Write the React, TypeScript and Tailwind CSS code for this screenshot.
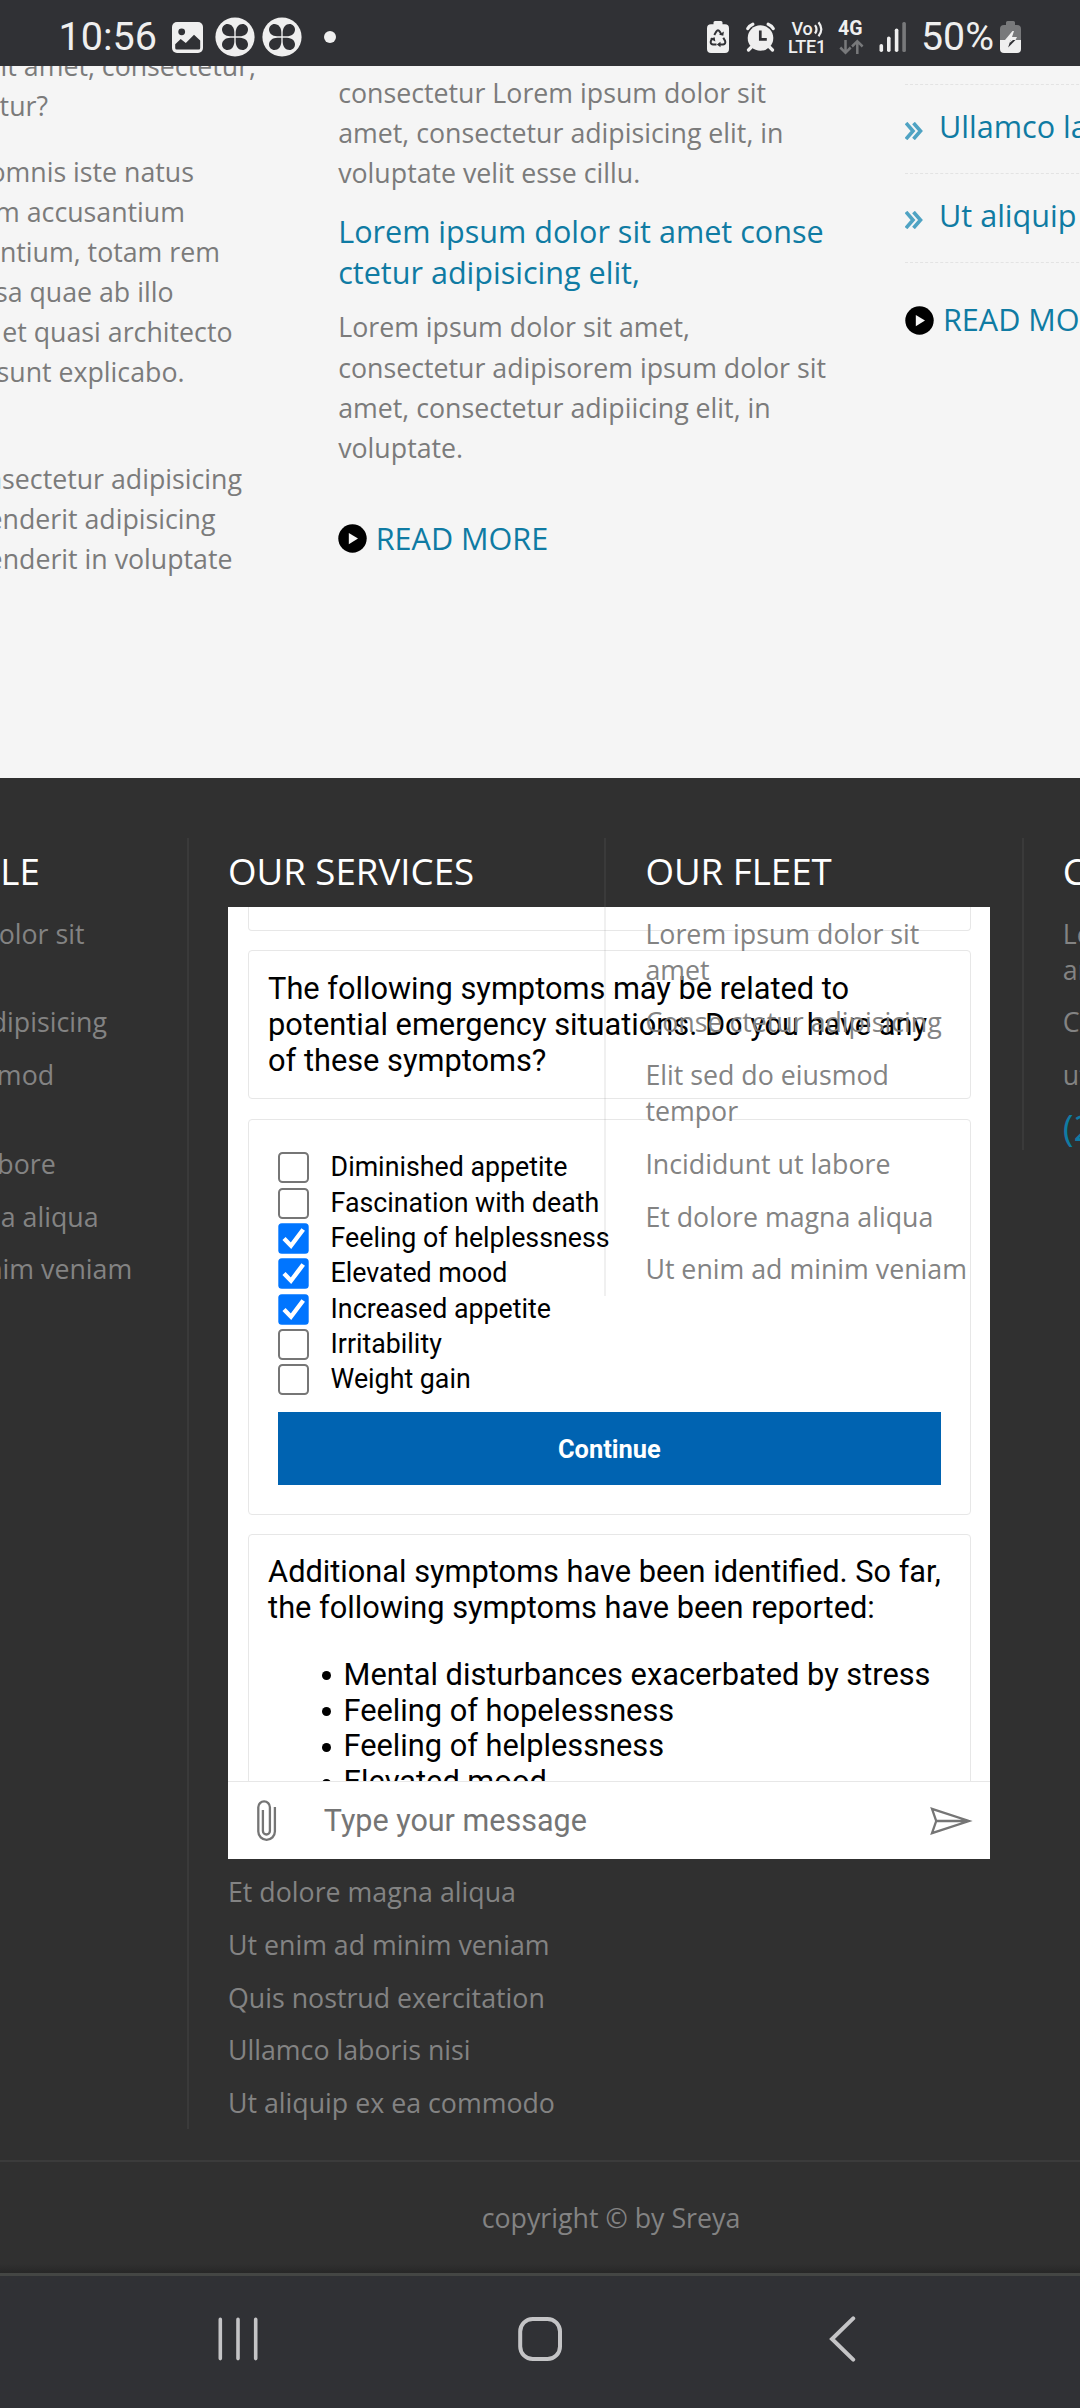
import type { ReactNode } from 'react';

const SANS = "font-['Open_Sans',sans-serif]";
const ROBOTO = "font-['Roboto',sans-serif]";

/* ---------- Status bar ---------- */

function CloverIcon() {
  return (
    <svg width="40" height="40" viewBox="0 0 40 40">
      <circle cx="20" cy="20" r="19.6" fill="#efefef" />
      <g fill="#303135">
        {[0, 90, 180, 270].map((r) => (
          <path
            key={r}
            transform={`rotate(${r} 20 20)`}
            d="M19.300 19.300H15C10 19 7 16.300 7 12.500C7 9.500 9.500 7 12.500 7C16.500 7 19.300 10.500 19.300 15.500Z"
          />
        ))}
      </g>
    </svg>
  );
}

function StatusBar() {
  return (
    <header className={`relative flex h-[66px] shrink-0 items-start bg-[#303135] text-[#efefef] ${ROBOTO}`}>
      <span className="ml-[58.500px] mt-[13.500px] text-[39.6px] leading-[46px]">10:56</span>
      <svg className="ml-[14.500px] mt-[22px]" width="31" height="31" viewBox="0 0 31 31">
        <rect width="31" height="31" rx="5" fill="#efefef" />
        <circle cx="9.700" cy="9.800" r="3.400" fill="#303135" />
        <path d="M3.200 22.300 8.700 17l5.100 4L22 12.800l6.200 5.800V26q0 1.500-1.500 1.500H4.700q-1.500 0-1.500-1.500Z" fill="#303135" />
      </svg>
      <span className="ml-[12px] mt-[17px]"><CloverIcon /></span>
      <span className="ml-[7px] mt-[17px]"><CloverIcon /></span>
      <span className="ml-[22px] mt-[31px] size-[12px] rounded-full bg-[#efefef]" />

      <div className="ml-auto mr-[59px] flex items-start">
        <svg className="mt-[21px]" width="22" height="32" viewBox="0 0 22 32">
          <path d="M6.500 3.300V1.500Q6.500 0 8 0h6q1.500 0 1.500 1.500v1.800H18q4 0 4 4V28q0 4-4 4H4q-4 0-4-4V7.300q0-4 4-4Z" fill="#efefef" />
          <g fill="none" stroke="#303135" strokeWidth="2">
            <path d="m7.300 14 2-3.400q1.700-2.600 3.400 0l1.600 2.700" />
            <path d="m16.300 16.700 1.700 3q1.200 3.200-2 3.800h-3.300" />
            <path d="M9.500 23.500H6q-3.200-.6-2-3.800l1.500-2.700" />
          </g>
          <path d="m12 13.800 4.300 1 .6-4.200ZM13.500 20.700v5.600l-3.700-2.800ZM3 17.700l4.700-1.500.6 4.300Z" fill="#303135" />
        </svg>
        <svg className="ml-[17px] mt-[22px]" width="30" height="31" viewBox="0 0 30 31">
          <circle cx="14.500" cy="16" r="12.800" fill="#efefef" />
          <g stroke="#efefef" strokeWidth="3.200" strokeLinecap="round" fill="none">
            <path d="M1.800 6.500q1.700-3 5-4.300M27.200 6.500q-1.700-3-5-4.300M5.500 25l-3 3M23.500 25l3 3" />
          </g>
          <path d="M14.300 8.500v8.800h6.500" stroke="#303135" strokeWidth="2.700" fill="none" />
        </svg>
        <div className="ml-[12px] mt-[20px] flex w-[41px] flex-col text-[18px] font-medium leading-[17.500px]">
          <span className="flex items-center pl-[3.500px] tracking-[-0.200px]">
            Vo
            <svg width="10" height="18" viewBox="0 0 10 18" className="ml-px" fill="none" stroke="#efefef" strokeWidth="2.200">
              <path d="M1 5.200q3 4.200 0 8.300M4.500 2.200q5.600 7.200 0 14" />
            </svg>
          </span>
          <span className="tracking-[-0.200px]">LTE1</span>
        </div>
        <div className="ml-[9px] mt-[19px] flex w-[28px] flex-col">
          <span className="text-[19.500px] font-bold leading-[19px]">4G</span>
          <svg className="ml-[1px] mt-[1px]" width="26" height="16" viewBox="0 0 26 16" fill="none" stroke="#78797b" strokeWidth="2.500">
            <path d="M6.500 1v12.500M1.300 8.500l5.200 5.300 5.200-5.300M18.300 15V2.500M13 7.500l5.300-5.300 5.300 5.300" />
          </svg>
        </div>
        <svg className="ml-[13px] mt-[22px]" width="28" height="30" viewBox="0 0 28 30">
          <rect x="0.500" y="22" width="3.600" height="8" rx="1.800" fill="#efefef" />
          <rect x="8" y="14.500" width="3.600" height="15.500" rx="1.800" fill="#efefef" />
          <rect x="15.800" y="6.500" width="3.600" height="23.500" rx="1.800" fill="#efefef" />
          <rect x="23.300" y="0" width="3.600" height="30" rx="1.500" fill="#78797b" />
        </svg>
        <span className="ml-[14px] mt-[13.500px] w-[79px] text-[39.300px] leading-[46px]">50%</span>
        <svg className="mt-[21px]" width="21" height="32" viewBox="0 0 21 32">
          <path d="M6 4V1.500Q6 0 7.500 0h6Q15 0 15 1.500V4h2q4 0 4 4v11H0V8q0-4 4-4Z" fill="#78797b" />
          <path d="M0 19h21v9q0 4-4 4H4q-4 0-4-4Z" fill="#efefef" />
          <path d="m10.500 19-2.300 7.500L15.500 19Z" fill="#303135" />
          <path d="M12.500 10 5 19h5.500l-1 3 3.500-3h2.500l1.500-3h-5l2-6Z" fill="#efefef" />
        </svg>
      </div>
    </header>
  );
}

/* ---------- Page body ---------- */

function ReadMore({ className }: { className: string }) {
  return (
    <a className={`flex items-start text-[30.600px] leading-[42px] text-[#0f7ba3] ${className}`}>
      <svg className="mt-[7.500px] shrink-0" width="29" height="29" viewBox="0 0 29 29">
        <circle cx="14.500" cy="14.500" r="14.200" fill="#000" />
        <path d="M10.800 9v11.200l9.200-5.600Z" fill="#f5f5f5" />
      </svg>
      <span className="ml-[8.500px]">READ MORE</span>
    </a>
  );
}

/* A line cut off by the left edge of the viewport; its end sits at the block's width. */
function Line({ w, children }: { w: string; children: ReactNode }) {
  return <p className={`flex justify-end ${w}`}>{children}</p>;
}

function ArrowItem({ children }: { children: ReactNode }) {
  return (
    <li className="flex h-[89px] border-b-[1.500px] border-dashed border-[#e3e3e3]">
      <svg className="mt-[37px] shrink-0" width="18" height="18" viewBox="0 0 18 18" fill="none" stroke="#4fa3c3" strokeWidth="3.600">
        <path d="m1 1 7 8-7 8M8.500 1l7 8-7 8" />
      </svg>
      <span className="ml-[15.500px] mt-[21px] text-[30.600px] leading-[40px] text-[#0f7ba3]">{children}</span>
    </li>
  );
}

function Body() {
  return (
    <main className="flex h-[711.500px] shrink-0 overflow-hidden whitespace-nowrap bg-[#f5f5f5] text-[26.740px] leading-[40.130px] text-[#7b7b7b]">
      <section className="w-[338.200px] shrink-0">
        <div className="-mt-[20px]">
          <Line w="w-[256px]">dolor sit amet, consectetur,</Line>
          <Line w="w-[48px]">adipisci velit tur?</Line>
        </div>
        <div className="mt-[25.600px]">
          <Line w="w-[194px]">Sed ut perspiciatis unde omnis iste natus</Line>
          <Line w="w-[185px]">error sit voluptatem accusantium</Line>
          <Line w="w-[220px]">doloremque laudantium, totam rem</Line>
          <Line w="w-[173.500px]">aperiam, eaque ipsa quae ab illo</Line>
          <Line w="w-[232.500px]">inventore veritatis et quasi architecto</Line>
          <Line w="w-[184.500px]">beatae vitae dicta sunt explicabo.</Line>
        </div>
        <div className="mt-[66.400px]">
          <Line w="w-[242px]">Lorem ipsum consectetur adipisicing</Line>
          <Line w="w-[215.500px]">elit, in reprehenderit adipisicing</Line>
          <Line w="w-[232.500px]">elit, in reprehenderit in voluptate</Line>
        </div>
      </section>

      <section className="w-[567.300px] shrink-0 pt-[7px]">
        <p>consectetur Lorem ipsum dolor sit</p>
        <p>amet, consectetur adipisicing elit, in</p>
        <p>voluptate velit esse cillu.</p>
        <h3 className="mb-[14.700px] mt-[17.600px] text-[30.560px] leading-[40.900px] text-[#0f7ba3]">
          Lorem ipsum dolor sit amet conse
          <br />
          ctetur adipisicing elit,
        </h3>
        <p>Lorem ipsum dolor sit amet,</p>
        <p>consectetur adipisorem ipsum dolor sit</p>
        <p>amet, consectetur adipiicing elit, in</p>
        <p>voluptate.</p>
        <ReadMore className="mt-[49px]" />
      </section>

      <section className="w-[320px] shrink-0">
        <ul className="-mt-[70px]">
          <ArrowItem>Quis nostrud</ArrowItem>
          <ArrowItem>Ullamco laboris nisi</ArrowItem>
          <ArrowItem>Ut aliquip ex ea</ArrowItem>
        </ul>
        <ReadMore className="mt-[35px]" />
      </section>
    </main>
  );
}

/* ---------- Chat widget ---------- */

const symptoms: [string, boolean][] = [
  ['Diminished appetite', false],
  ['Fascination with death', false],
  ['Feeling of helplessness', true],
  ['Elevated mood', true],
  ['Increased appetite', true],
  ['Irritability', false],
  ['Weight gain', false],
];

const reported = [
  'Mental disturbances exacerbated by stress',
  'Feeling of hopelessness',
  'Feeling of helplessness',
  'Elevated mood',
];

function Checkbox({ checked }: { checked: boolean }) {
  return checked ? (
    <svg width="31" height="31" viewBox="0 0 31 31">
      <rect x="0.300" y="0.300" width="30.400" height="30.400" rx="3.500" fill="#0075ff" />
      <path d="m6 15.500 7 7.200L25.200 6.500" fill="none" stroke="#fff" strokeWidth="4.400" />
    </svg>
  ) : (
    <span className="size-[31px] rounded-[4.500px] border-[2px] border-[#767676] bg-white" />
  );
}

function Chat() {
  const card = 'border-[1.500px] border-[#e7e7e7] rounded-[4px]';
  return (
    <div className={`flex h-[952.500px] w-[762px] flex-col bg-white text-[30.750px] leading-[35.900px] text-black ${ROBOTO}`}>
      <div className="flex h-[874.500px] shrink-0 flex-col overflow-hidden px-[19.300px]">
        <div className="h-[24px] shrink-0 rounded-b-[4px] border-x border-b border-[#e7e7e7]" />
        <div className={`mt-[19.500px] h-[149px] shrink-0 pl-[19.500px] pt-[20px] ${card}`}>
          The following symptoms may be related to
          <br />
          potential emergency situations. Do you have any
          <br />
          of these symptoms?
        </div>
        <div className={`mt-[19.500px] h-[396px] shrink-0 px-[29px] pt-[30.600px] ${card}`}>
          {symptoms.map(([label, checked]) => (
            <label key={label} className="flex h-[35.350px] items-center text-[26.770px] leading-[31px]">
              <Checkbox checked={checked} />
              <span className="ml-[22px]">{label}</span>
            </label>
          ))}
          <button className="mt-[14.600px] flex h-[73px] w-full items-center justify-center bg-[#0063b1] text-[25.400px] font-bold leading-[30px] text-white">
            Continue
          </button>
        </div>
        <div className={`mt-[19px] h-[420px] shrink-0 pl-[19.500px] pt-[19.300px] ${card}`}>
          Additional symptoms have been identified. So far,
          <br />
          the following symptoms have been reported:
          <ul className="mt-[31px]">
            {reported.map((item) => (
              <li key={item} className="flex items-center pl-[53.500px]">
                <span className="mr-[12.500px] mt-[2px] size-[9.500px] rounded-full bg-black" />
                {item}
              </li>
            ))}
          </ul>
        </div>
      </div>
      <div className="flex grow items-center border-t-[1.500px] border-[#e7e7e7] text-[#757575]">
        <svg className="-mt-px ml-[29px]" width="20" height="42" viewBox="0 0 20 42" fill="none" stroke="#757575" strokeWidth="2.300">
          <path d="M17.900 8v24.500a8.300 8.300 0 0 1-16.600 0V8.200a5.800 5.800 0 0 1 11.600 0V32a3.500 3.500 0 0 1-7 0V11" />
        </svg>
        <span className="ml-[46.500px] text-[30.500px]">Type your message</span>
        <svg className="ml-auto mr-[17.500px]" width="43" height="28" viewBox="0 0 43 28" fill="none" stroke="#757575" strokeWidth="2.300">
          <path d="M2 1.800 39 14 2 26.200 6.200 14ZM6.200 14H39" />
        </svg>
      </div>
    </div>
  );
}

/* ---------- Footer ---------- */

const fleet = [
  ['Lorem ipsum dolor sit', 'amet'],
  ['Conse ctetur adipisicing'],
  ['Elit sed do eiusmod', 'tempor'],
  ['Incididunt ut labore'],
  ['Et dolore magna aliqua'],
  ['Ut enim ad minim veniam'],
];

const services = [
  ['Et dolore magna aliqua'],
  ['Ut enim ad minim veniam'],
  ['Quis nostrud exercitation'],
  ['Ullamco laboris nisi'],
  ['Ut aliquip ex ea commodo'],
];

const contact = [['Lorem ipsum dolor sit', 'amet'], ['Conse ctetur'], ['ut labore']];

function Links({ items, className }: { items: string[][]; className: string }) {
  return (
    <ul className={`flex flex-col gap-[16.300px] ${className}`}>
      {items.map((lines) => (
        <li key={lines[0]}>
          {lines.map((l) => (
            <p key={l}>{l}</p>
          ))}
        </li>
      ))}
    </ul>
  );
}

function FooterColumn({ title, children }: { title: string; children: ReactNode }) {
  return (
    <section className="w-[417.400px] shrink-0 border-l-2 border-[#808080]/12 pb-[8.400px] pl-[38.900px] pt-[8px]">
      <h2 className="text-[36.670px] leading-[50px] text-white">{title}</h2>
      {children}
    </section>
  );
}

function Footer() {
  return (
    <footer className="flex h-[1495.500px] shrink-0 flex-col overflow-hidden bg-[#303030] text-[26.760px] leading-[36.300px] text-[#838383]">
      <div className="ml-[-230.300px] flex h-[1382px] shrink-0 items-start whitespace-nowrap pt-[60.500px]">
        <FooterColumn title="OUR PROFILE">
          <Links items={fleet} className="mt-[19.600px]" />
        </FooterColumn>
        <FooterColumn title="OUR SERVICES">
          <div className="ml-[0.300px] mt-[10.500px]">
            <Chat />
          </div>
          <Links items={services} className="mt-[15.400px]" />
        </FooterColumn>
        <FooterColumn title="OUR FLEET">
          <Links items={fleet} className="mt-[19.600px]" />
        </FooterColumn>
        <FooterColumn title="CONTACT">
          <Links items={contact} className="mt-[19.600px]" />
          <p className="-mb-[5px] mt-[13.500px] text-[36.670px] leading-[40px] text-[#0f7ba3]">(224) 555</p>
        </FooterColumn>
      </div>
      <p className="border-t-2 border-[#3b3b3b] pl-[481.700px] pt-[38px]">copyright © by Sreya</p>
      <div className="mt-auto h-[9px] shrink-0 bg-linear-to-b from-[#303030] to-[#272727]" />
    </footer>
  );
}

function NavBar() {
  return (
    <nav className="flex h-[135px] shrink-0 items-start border-t-[3px] border-[#444644] bg-[#303135] pt-[40px]">
      <svg className="ml-[218px]" width="40" height="46" viewBox="0 0 40 46" stroke="#c4c4c6" strokeWidth="3.600" strokeLinecap="round">
        <path d="M2.300 3.400v39.200M20 3.400v39.200M37.700 3.400v39.200" />
      </svg>
      <svg className="ml-[259px]" width="46" height="46" viewBox="0 0 46 46" fill="none" stroke="#c4c4c6" strokeWidth="4">
        <rect x="3.200" y="3" width="39.800" height="40" rx="12.500" />
      </svg>
      <svg className="ml-[265px]" width="30" height="48" viewBox="0 0 30 48" fill="none" stroke="#c4c4c6" strokeWidth="4" strokeLinecap="round">
        <path d="M25.200 2.400 4 23l21.200 20.600" />
      </svg>
    </nav>
  );
}

export default function App() {
  return (
    <div className={`flex h-[2408px] w-[1080px] flex-col overflow-hidden bg-[#303135] ${SANS}`}>
      <StatusBar />
      <Body />
      <Footer />
      <NavBar />
    </div>
  );
}
